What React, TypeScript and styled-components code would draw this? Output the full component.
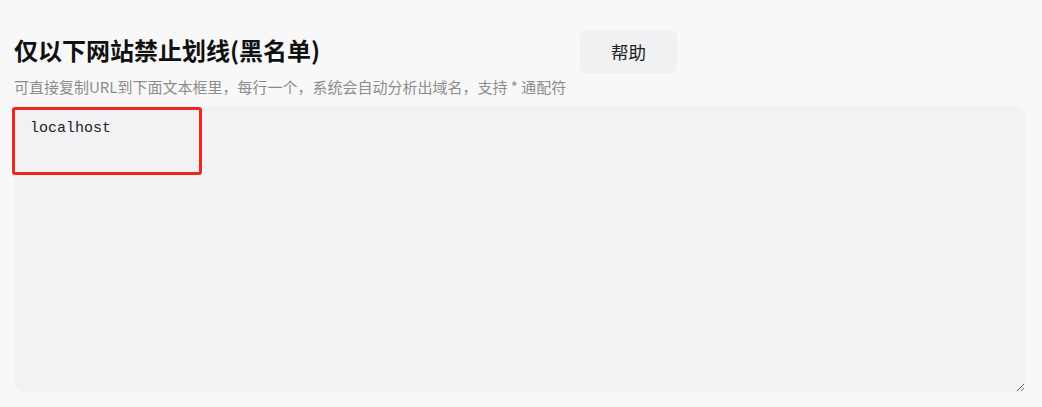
import React, { useState } from 'react';
import styled, { createGlobalStyle } from 'styled-components';

const GlobalStyle = createGlobalStyle`
  html, body {
    margin: 0;
    padding: 0;
    background: #f8f8f8;
    font-family: "Noto Sans CJK SC", "Noto Sans", sans-serif;
  }
`;

const Page = styled.div`
  padding: 29px 17px 15px 15px;
  display: flex;
  flex-direction: column;
`;

const Header = styled.div`
  display: flex;
  align-items: center;
`;

const Title = styled.h2`
  margin: -2px 0 0 -1px;
  width: 566px;
  font-size: 24px;
  font-weight: 700;
  color: #111;
  line-height: 40px;
`;

const HelpButton = styled.button`
  width: 97px;
  height: 43px;
  margin-top: 1px;
  border: none;
  border-radius: 6px;
  background: #f1f1f3;
  color: #222;
  font-family: "Noto Sans CJK SC", sans-serif;
  font-size: 17.5px;
  cursor: pointer;
`;

const Hint = styled.p`
  margin: 4px 0 0 -1px;
  font-size: 15px;
  line-height: 20px;
  color: #8c8c8c;
`;

const EditorWrap = styled.div`
  position: relative;
  margin-top: 9px;
`;

const Editor = styled.textarea`
  display: block;
  box-sizing: border-box;
  width: 100%;
  height: 286px;
  border: none;
  outline: none;
  border-radius: 8px;
  background: #f2f2f4;
  padding: 13px 16px 10px 15px;
  font-family: "Liberation Mono", monospace;
  font-size: 15px;
  line-height: 20px;
  color: #222;
  resize: vertical;
`;

// red highlight drawn over the first line
const Highlight = styled.div`
  position: absolute;
  left: -3px;
  top: 1px;
  width: 184px;
  height: 62px;
  border: 3px solid #f0261c;
  border-radius: 3px;
  pointer-events: none;
`;

const App = () => {
  const [value, setValue] = useState('localhost');
  return (
    <>
      <GlobalStyle />
      <Page>
        <Header>
          <Title>仅以下网站禁止划线(黑名单)</Title>
          <HelpButton>帮助</HelpButton>
        </Header>
        <Hint>可直接复制URL到下面文本框里，每行一个，系统会自动分析出域名，支持 * 通配符</Hint>
        <EditorWrap>
          <Editor value={value} onChange={(e) => setValue(e.target.value)} spellCheck={false} />
          <Highlight />
        </EditorWrap>
      </Page>
    </>
  );
};

export default App;
